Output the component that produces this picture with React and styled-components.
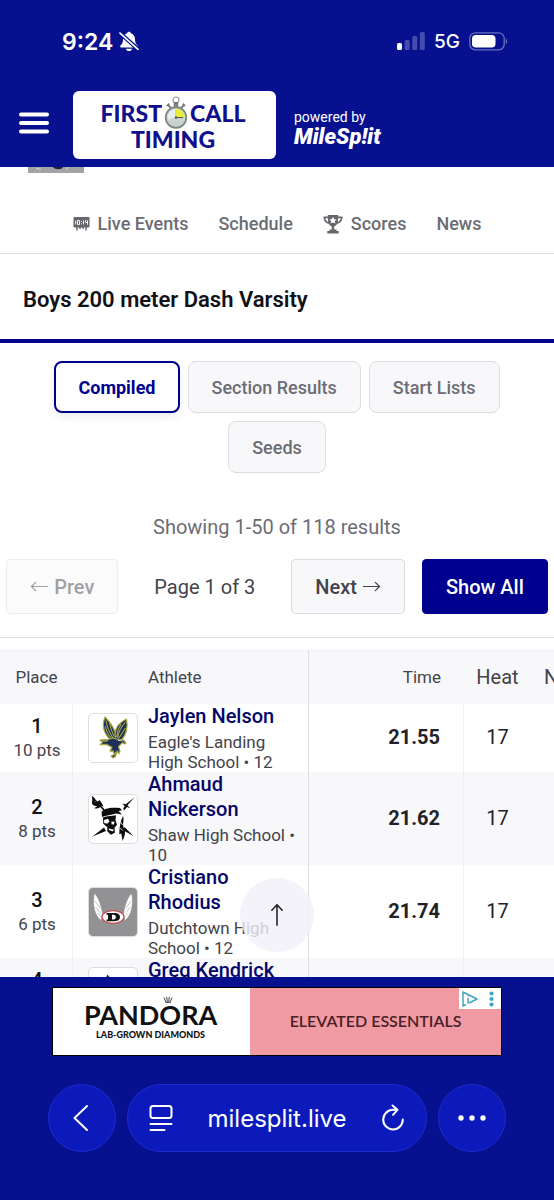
import React from "react"
import styled, { createGlobalStyle } from "styled-components"

const colors = {
  chrome: "#07108f",
  glass: "#0c1abb",
  glassEdge: "#1c2ccb",
  navy: "#00008f",
  name: "#05056a",
  title: "#111116",
  text: "#43434a",
  muted: "#6c6c74",
  panel: "#f8f8fb",
  line: "#dcdce1",
  faint: "#f1f1f5",
}

const GlobalStyle = createGlobalStyle`
  * {
    box-sizing: border-box;
  }
  body {
    margin: 0;
    background: ${colors.chrome};
    font-family: Roboto, sans-serif;
  }
  button {
    font-family: inherit;
    margin: 0;
    cursor: pointer;
  }
  svg {
    display: block;
    flex-shrink: 0;
  }
`

const Screen = styled.div`
  height: 100vh;
  display: flex;
  flex-direction: column;
`

/* ---------- top ---------- */

const StatusBar = styled.div`
  display: flex;
  justify-content: space-between;
  align-items: center;
  height: 83px;
  padding: 0 46px 0 62px;
  color: #fff;
  font-family: Inter, sans-serif;
`
const StatusGroup = styled.div`
  display: flex;
  align-items: center;
  gap: ${props => props.$gap};
`
const Clock = styled.span`
  font-size: 23px;
  font-weight: 600;
`
const Network = styled.span`
  font-size: 19px;
  font-weight: 500;
`
const Header = styled.header`
  display: flex;
  align-items: center;
  height: 84px;
  padding: 0 19px;
  color: #fff;
`
const MenuButton = styled.button`
  border: none;
  background: none;
  padding: 0 0 5px;
  margin-right: 24px;
`
const LogoLink = styled.a`
  display: flex;
  flex-direction: column;
  align-items: center;
  width: 203px;
  height: 68px;
  padding: 9px 3px 0 0;
  border-radius: 6px;
  background: #fff;
  color: #10108c;
  font-family: Lato, sans-serif;
  font-size: 23px;
  font-weight: 900;
  line-height: 26px;
  text-decoration: none;
`
const LogoLine = styled.span`
  display: flex;
  align-items: center;
  height: 26px;
  gap: 2px;
`
const Powered = styled.a`
  display: flex;
  flex-direction: column;
  margin-left: 18px;
  padding-top: 4px;
  color: #fff;
  font-size: 14px;
  line-height: 20px;
  text-decoration: none;
`
const MileSplit = styled.span`
  font-size: 22px;
  font-weight: 900;
  font-style: italic;
`

/* ---------- page ---------- */

const Main = styled.main`
  position: relative;
  flex: 1;
  min-height: 0;
  overflow: hidden;
  background: #fff;
`
const MeetBadge = styled.div`
  width: 56px;
  height: 6px;
  margin-left: 28px;
  background: #a3a3a5;
  overflow: hidden;
`
const Nav = styled.nav`
  display: flex;
  justify-content: center;
  gap: 30px;
  padding: 39px 0 17px;
  border-bottom: 1px solid ${colors.line};
`
const NavLink = styled.a`
  display: flex;
  align-items: center;
  gap: 8px;
  color: ${colors.muted};
  font-size: 18px;
  font-weight: 500;
  line-height: 24px;
  text-decoration: none;
`
const Title = styled.h1`
  margin: 0;
  padding: 32px 23px 25px;
  border-bottom: 4px solid ${colors.navy};
  color: ${colors.title};
  font-size: 22px;
  font-weight: 600;
  line-height: 28px;
`
const Tabs = styled.div`
  display: flex;
  flex-wrap: wrap;
  justify-content: center;
  gap: 8px;
  padding: 18px 20px 0;
`
const Tab = styled.button`
  height: 52px;
  padding: 0 ${props => props.$active ? "22px" : "23px"};
  border: ${props => props.$active ? `2px solid ${colors.navy}` : `1px solid ${colors.line}`};
  border-radius: 8px;
  background: ${props => props.$active ? "#fff" : colors.panel};
  color: ${props => props.$active ? colors.navy : colors.muted};
  box-shadow: ${props => props.$active ? "0 4px 8px rgba(0, 0, 0, 0.08)" : "none"};
  font-size: 18px;
  font-weight: ${props => props.$active ? 700 : 500};
`
const Summary = styled.p`
  margin: 42px 0 20px;
  color: ${colors.muted};
  font-size: 20px;
  line-height: 24px;
  text-align: center;
`
const Pager = styled.div`
  display: flex;
  justify-content: center;
  align-items: center;
  gap: 17px;
  padding-bottom: 23px;
  border-bottom: 1px solid ${colors.line};
`
const PagerButton = styled.button`
  display: flex;
  align-items: center;
  gap: 5px;
  height: 55px;
  padding: 0 23px;
  border: 1px solid ${props => props.$primary ? colors.navy : colors.line};
  border-radius: 4px;
  background: ${props => props.$primary ? colors.navy : colors.panel};
  color: ${props => props.$primary ? "#fff" : colors.text};
  font-size: 20px;
  font-weight: 500;
  &:disabled {
    opacity: 0.5;
  }
`
const PageLabel = styled.span`
  padding: 0 19px;
  color: ${colors.text};
  font-size: 20px;
`

/* ---------- results ---------- */

const Results = styled.table`
  width: 100%;
  min-width: 640px;
  margin-top: 12px;
  border-collapse: separate;
  border-spacing: 0;
  table-layout: fixed;
`
const HeadCell = styled.th`
  width: ${props => props.$width};
  height: 54px;
  padding: ${props => props.$pad || "0"};
  background: ${colors.panel};
  border-top: 1px solid ${colors.faint};
  border-right: ${props => props.$edge ? `1px solid ${colors.line}` : "none"};
  color: ${colors.text};
  font-size: ${props => props.$big ? "20px" : "17px"};
  font-weight: 400;
  text-align: ${props => props.$align || "center"};
`
const Row = styled.tr`
  background: ${props => props.$shaded ? colors.panel : "#fff"};
`
const Cell = styled.td`
  padding: ${props => props.$pad || "0"};
  border-right: ${props => props.$last ? "none" : `1px solid ${props.$edge ? colors.line : colors.faint}`};
  color: #222226;
  font-size: 20px;
  font-weight: ${props => props.$bold ? 700 : 400};
  line-height: 24px;
  text-align: ${props => props.$align || "center"};
`
const Place = styled.div`
  color: ${colors.title};
  font-size: 20px;
  font-weight: 500;
`
const Points = styled.div`
  min-height: 24px;
  color: ${colors.text};
  font-size: 17px;
`
const Athlete = styled.div`
  display: flex;
  align-items: center;
  gap: 10px;
  text-align: left;
`
const TeamLogo = styled.div`
  flex-shrink: 0;
  width: 50px;
  height: 50px;
  padding: 1px;
  border: 1px solid ${colors.line};
  border-radius: 5px;
  background: ${props => props.$fill || "#fff"};
`
const AthleteName = styled.a`
  display: block;
  color: ${colors.name};
  font-size: 20px;
  font-weight: 500;
  line-height: 25px;
  text-decoration: none;
`
const School = styled.div`
  min-height: 40px;
  margin-top: 3px;
  color: ${colors.text};
  font-size: 17px;
  line-height: 20px;
`
const ToTop = styled.button`
  position: absolute;
  left: 50%;
  bottom: 25px;
  display: flex;
  align-items: center;
  justify-content: center;
  width: 74px;
  height: 74px;
  margin-left: -37px;
  border: none;
  border-radius: 50%;
  background: rgba(240, 240, 248, 0.8);
  color: #222;
`

/* ---------- bottom ---------- */

const Bottom = styled.footer`
  padding: 10px 48px 48px;
  background: ${colors.chrome};
`
const Ad = styled.a`
  position: relative;
  display: flex;
  max-width: 450px;
  height: 69px;
  margin: 0 auto 28px;
  border: 1px solid #000;
  background: #fff;
  text-decoration: none;
  font-family: Lato, sans-serif;
`
const AdBrand = styled.div`
  flex: 196;
  display: flex;
  flex-direction: column;
  align-items: center;
  justify-content: center;
  padding: 0 2px 2px 0;
  color: #111;
`
const Pandora = styled.span`
  position: relative;
  font-size: 27px;
  font-weight: 700;
  line-height: 28px;
`
const Crown = styled.svg`
  position: absolute;
  left: 79px;
  top: -5px;
`
const AdTag = styled.span`
  font-size: 9px;
  font-weight: 900;
  line-height: 12px;
`
const AdMessage = styled.div`
  flex: 252;
  display: flex;
  align-items: center;
  justify-content: center;
  padding-bottom: 2px;
  background: #f09aa4;
  color: #4a2024;
  font-size: 16px;
  font-weight: 600;
`
const AdChoices = styled.span`
  position: absolute;
  right: 0;
  top: 0;
  display: flex;
  align-items: center;
  justify-content: center;
  gap: 11px;
  width: 42px;
  height: 21px;
  padding-right: 4px;
  background: #fff;
`
const Toolbar = styled.div`
  display: flex;
  gap: 11px;
`
const GlassButton = styled.button`
  display: flex;
  align-items: center;
  justify-content: center;
  width: 68px;
  height: 68px;
  padding: 0;
  border: 1px solid ${colors.glassEdge};
  border-radius: 34px;
  background: ${colors.glass};
  color: #fff;
`
const Address = styled.div`
  flex: 1;
  display: flex;
  align-items: center;
  justify-content: space-between;
  height: 68px;
  padding: 0 21px;
  border: 1px solid ${colors.glassEdge};
  border-radius: 34px;
  background: ${colors.glass};
  color: #fff;
  font-family: Inter, sans-serif;
`
const PlainButton = styled.button`
  border: none;
  padding: 0;
  background: none;
  color: inherit;
  font-size: ${props => props.$size || "16px"};
`

const BellOff = () => (
  <svg width="20" height="21" viewBox="0 0 20 21" fill="#fff">
    <path d="M10 .8c1 0 1.700.6 1.800 1.400 2.700.8 4.200 3 4.200 5.800 0 3.600.8 4.800 2.500 6.600.8.9.4 2-.8 2H2.300c-1.200 0-1.600-1.100-.8-2C3.200 12.800 4 11.600 4 8c0-2.800 1.500-5 4.200-5.800C8.300 1.400 9 .8 10 .8z" />
    <path d="M6.900 17.700h6.200c-.3 1.500-1.500 2.400-3.100 2.400s-2.800-.9-3.100-2.400z" />
    <path d="M.6 1.800L20 19" stroke={colors.chrome} strokeWidth="4.200" />
    <path d="M1 2.100l18 16.200" stroke="#fff" strokeWidth="1.700" strokeLinecap="round" />
  </svg>
)

const Signal = () => (
  <svg width="28" height="19" viewBox="0 0 28 19" fill="#fff">
    <rect x="0" y="11" width="5" height="7" rx="1.500" />
    <rect x="7.700" y="8" width="5" height="10" rx="1.500" opacity=".25" />
    <rect x="15.300" y="4" width="5" height="14" rx="1.500" opacity=".25" />
    <rect x="22.800" y="0" width="5" height="18" rx="1.500" opacity=".25" />
  </svg>
)

const Battery = () => (
  <svg width="39" height="19" viewBox="0 0 39 19">
    <rect x=".8" y=".8" width="34.400" height="17" rx="5.500" fill="none" stroke="#fff" strokeOpacity=".4" strokeWidth="1.300" />
    <rect x="3" y="3" width="23.500" height="12.600" rx="3.800" fill="#fff" />
    <path d="M36.800 6.500c1.400.6 1.400 5 0 5.600z" fill="#fff" opacity=".5" />
  </svg>
)

const Stopwatch = () => (
  <svg width="24" height="34" viewBox="0 0 24 34">
    <circle cx="12" cy="4" r="3" fill="none" stroke="#9a9a9a" strokeWidth="1.200" />
    <path d="M10.700 7h2.600v4h-2.600zM4 9l3 3M20 9l-3 3" stroke="#777" strokeWidth="1.800" fill="#999" />
    <path d="M2.800 10l2.400-2.300M21.200 10l-2.400-2.300" stroke="#777" strokeWidth="1.600" />
    <circle cx="12" cy="21.500" r="10.300" fill="#c9d3d2" stroke="#7d8584" strokeWidth="1.700" />
    <path d="M4 24a8.500 8.500 0 0 1 7-11v8.500z" fill="#e8eeee" />
    <path d="M12 21.500v-9a9 9 0 0 1 9 9z" fill="#e9ee3c" />
    <path d="M11 21.500h8" stroke="#555" strokeWidth="1" />
    <circle cx="12" cy="21.500" r="1.200" fill="#555" />
  </svg>
)

const Scoreboard = () => (
  <svg width="17" height="14" viewBox="0 0 17 14">
    <rect x=".5" y="0" width="16" height="10.500" rx="1" fill="#66666c" />
    <path d="M4 10v3.500M13 10v3.500M7 10v2M10 10v2" stroke="#66666c" strokeWidth="1.400" />
    <path d="M2.700 3.500v4M4.500 3.500h2v4h-2zM8.500 4v1M8.500 6.300v1M10.500 3.500v4M12.500 3.200v2.300h2M14.500 3.200v4.500" stroke="#fff" strokeWidth=".9" fill="none" />
  </svg>
)

const Trophy = () => (
  <svg width="20" height="19" viewBox="0 0 20 19">
    <path d="M4.800 0h10.400v1.600h4.300c.1 3.900-1.700 6.700-5.300 7.200-.8 1.400-1.800 2.300-3 2.800v3h2.300v1.500h2.200V18.500H4.300v-2.400h2.200v-1.500h2.300v-3c-1.200-.5-2.200-1.400-3-2.800C2.200 8.300.4 5.500.5 1.600h4.300z" fill="#66666c" />
    <path d="M2.300 3.200h2.600c0 1.400.1 2.600.4 3.700-1.700-.6-2.700-1.800-3-3.700zM17.700 3.200h-2.600c0 1.400-.1 2.600-.4 3.700 1.700-.6 2.700-1.800 3-3.700z" fill="#fff" />
    <path d="M10 1.800l1.100 2.300 2.500.3-1.800 1.700.5 2.500L10 7.400 7.700 8.600l.5-2.500-1.800-1.700 2.500-.3z" fill="#fff" />
  </svg>
)

const Arrow = ({ turn = 0, size = 19 }) => (
  <svg width={size} height={size} viewBox="0 0 20 20" fill="none" stroke="currentColor" strokeWidth="1.300" strokeLinecap="round" strokeLinejoin="round">
    <path transform={`rotate(${turn} 10 10)`} d="M1.500 10h17M14 5.700l4.500 4.300-4.500 4.300" />
  </svg>
)

const Eagle = () => (
  <svg width="46" height="46" viewBox="0 0 46 46">
    <g fill="#1d3157" stroke="#a9a847" strokeWidth="1.200" strokeLinejoin="round">
      <path d="M15 2c-2.500 6-2.300 12.500 1.500 18 1.500 2.500 3.500 4.500 6 7l4-4C25.500 14 20 7 15 2z" />
      <path d="M36.500 4c-6.500 3-11 8-11.500 15l1 8 5.500-2C37 19 38 12 36.500 4z" />
      <path d="M10 25l8-.5 5-1.500 6 2c3-1 5.500 0 7 3.500l-2 .3-1.500-1.200-4 4 1.500 4.400-1.200 2.800-1.600-3-1.700 5.500-2.400 1.700-2-2 3.200-1.500-1.300-3.400-3-.3 2-3.400-5.500-3-6.500.3 2.500-2.300z" />
    </g>
    <path d="M16 5.500c1 7 4 13 7 17.500M15.200 11c1 5 3 9 6 12M19.500 8c1 5 3 10 4.500 13.500M35.500 7c-4.500 5-7 10-8 16M35.500 13c-2.500 4-5 8-7.500 11M31 9c-2.500 4-4 8-4.500 13" stroke="#a9a847" strokeWidth="1.100" fill="none" />
    <path d="M12 26l6-.3M20 36l4 .5M24 40l2-3" stroke="#a9a847" strokeWidth="1.400" fill="none" />
    <path d="M28 25.500c1.500-.5 3-.3 4.200.6" stroke="#e8e8ee" strokeWidth="1" fill="none" />
  </svg>
)

const Pirate = () => (
  <svg width="46" height="46" viewBox="0 0 46 46" fill="#0c0c0c">
    <path d="M2 0c2.500.8 3 3.500 2.700 6 1.800.5 3.500-.3 4.500-2 2 1.500 3 4 4.500 6.500l-2.500-.8c-1.500 2.500-4.500 3.500-7 2.300l3.300-1.400C3.500 10 .8 8 2.300 4.800z" />
    <path d="M3 2l11 12" stroke="#0c0c0c" strokeWidth="1.800" />
    <path d="M44.500 1.200l-7 8 2.500 3-3-1.200-3 3.500-.8-2.300 1.500-2-2.300-2.700 3.300.8z" />
    <path d="M11.500 16c2.500-3.500 8.500-5 18.500-4l2 2.300-3.500.7 3.500 3.500-6-1c-5 1.500-10 1.800-14 3.500z" />
    <path d="M13 21.500c4-1.800 9-1.500 13-2.300l-.5 5 1.500 4.500-2.500 3 .3 5-4 2-3.500-3.500v-4l-4-3.500z" />
    <path d="M14 24l4-1.300 1.500 3-2.500 2-2.800-.8zM21.500 25.500l3 .3-.5 2.700-2.500-.2zM18.500 32.500l5 .9-.4 2-4-1.400z" fill="#fff" />
    <path d="M2.500 40.500l11.500-9 2 3.500zM43.500 40l-9-9-1 3.500z" />
    <path d="M33 20c1.500 4-1 8 .8 12 2.500 4 .8 8-1.200 13l-1.300-7.500-2 .8c0-6 .8-13 3.700-18.300z" />
    <path d="M30.500 26l2 3M30.200 32l2.500 2.500" stroke="#fff" strokeWidth=".8" />
  </svg>
)

const WingedD = () => (
  <svg width="46" height="46" viewBox="0 0 46 46">
    <g fill="#fff" stroke="#888" strokeWidth=".5">
      <path d="M4.500 4c5 6.500 7 13 8.200 22.500l-1.500 5C4.500 27 2 15 4.500 4z" />
      <path d="M41.500 4c-5 6.500-7 13-8.200 22.500l1.500 5C41.500 27 44 15 41.500 4z" />
      <path d="M5 12l5 7M5.500 18l5 6M7.500 24l4 4M41 12l-5 7M40.500 18l-5 6M38.500 24l-4 4" />
    </g>
    <ellipse cx="23" cy="28" rx="11" ry="6.300" fill="#fff" stroke="#c64e4e" strokeWidth="1.300" />
    <path fillRule="evenodd" d="M16.500 24h8c4 0 5.500 1.800 5.500 4s-1.500 4.200-5.500 4.200h-8v-1.700h1.500v-4.800h-1.500zM22 25.800v4.700h1.800c1.300 0 2-1 2-2.400s-.7-2.300-2-2.300z" fill="#151515" />
  </svg>
)

const Peak = () => (
  <svg width="46" height="46" viewBox="0 0 46 46">
    <path d="M17.500 5.500l3 4 5 8h-14z" fill="#2a2a2e" />
  </svg>
)

const results = [
  { place: 1, points: "10 pts", name: "Jaylen Nelson", school: "Eagle's Landing High School • 12", time: "21.55", heat: 17, logo: <Eagle /> },
  { place: 2, points: "8 pts", name: "Ahmaud Nickerson", school: "Shaw High School • 10", time: "21.62", heat: 17, logo: <Pirate /> },
  { place: 3, points: "6 pts", name: "Cristiano Rhodius", school: "Dutchtown High School • 12", time: "21.74", heat: 17, logo: <WingedD />, fill: "#929294" },
  { place: 4, name: "Greg Kendrick", logo: <Peak /> },
]

const ResultRow = ({ result, shaded }) => (
  <Row $shaded={shaded}>
    <Cell $pad="0 0 0 2px">
      <Place>{result.place}</Place>
      <Points>{result.points}</Points>
    </Cell>
    <Cell $edge $pad="0 8px 0 15px">
      <Athlete>
        <TeamLogo $fill={result.fill}>{result.logo}</TeamLogo>
        <div>
          <AthleteName href="#athlete">{result.name}</AthleteName>
          <School>{result.school}</School>
        </div>
      </Athlete>
    </Cell>
    <Cell $bold $align="right" $pad="0 23px 2px 0">{result.time}</Cell>
    <Cell $last $pad="0 0 2px">{result.heat}</Cell>
    <Cell $last />
  </Row>
)

const App = () => {
  return (
    <Screen>
      <GlobalStyle />
      <StatusBar>
        <StatusGroup $gap="6px">
          <Clock>9:24</Clock>
          <BellOff />
        </StatusGroup>
        <StatusGroup $gap="9px">
          <Signal />
          <Network>5G</Network>
          <Battery />
        </StatusGroup>
      </StatusBar>
      <Header>
        <MenuButton aria-label="Menu">
          <svg width="30" height="22" viewBox="0 0 30 22" stroke="#fff" strokeWidth="4" strokeLinecap="round">
            <path d="M2 2.500h26M2 11h26M2 19.500h26" />
          </svg>
        </MenuButton>
        <LogoLink href="#home">
          <LogoLine>FIRST <Stopwatch /> CALL</LogoLine>
          <LogoLine>TIMING</LogoLine>
        </LogoLink>
        <Powered href="#milesplit">
          powered by
          <MileSplit>MileSp!it</MileSplit>
        </Powered>
      </Header>

      <Main>
        <MeetBadge>
          <svg width="56" height="6" viewBox="0 0 56 6">
            <path d="M25 0h10c-1 3-8 3-10 0z" fill="#20204a" />
            <path d="M8 1l5 1.500M40 0l-2 2.500" stroke="#d8d8dc" />
          </svg>
        </MeetBadge>
        <Nav>
          <NavLink href="#live"><Scoreboard /> Live Events</NavLink>
          <NavLink href="#schedule">Schedule</NavLink>
          <NavLink href="#scores"><Trophy /> Scores</NavLink>
          <NavLink href="#news">News</NavLink>
        </Nav>
        <Title>Boys 200 meter Dash Varsity</Title>
        <Tabs>
          <Tab $active>Compiled</Tab>
          <Tab>Section Results</Tab>
          <Tab>Start Lists</Tab>
          <Tab>Seeds</Tab>
        </Tabs>
        <Summary>Showing 1-50 of 118 results</Summary>
        <Pager>
          <PagerButton disabled><Arrow turn={180} /> Prev</PagerButton>
          <PageLabel>Page 1 of 3</PageLabel>
          <PagerButton>Next <Arrow /></PagerButton>
          <PagerButton $primary>Show All</PagerButton>
        </Pager>
        <Results>
          <thead>
            <tr>
              <HeadCell $width="73px" $pad="0 0 2px">Place</HeadCell>
              <HeadCell $width="236px" $align="left" $pad="0 0 2px 75px" $edge>Athlete</HeadCell>
              <HeadCell $width="155px" $align="right" $pad="0 23px 2px 0">Time</HeadCell>
              <HeadCell $width="67px" $pad="0 0 2px" $big>Heat</HeadCell>
              <HeadCell $align="left" $pad="0 0 2px 13px" $big>N</HeadCell>
            </tr>
          </thead>
          <tbody>
            {results.map((result, i) => (
              <ResultRow key={result.place} result={result} shaded={i % 2 === 1} />
            ))}
          </tbody>
        </Results>
        <ToTop aria-label="Back to top"><Arrow turn={-90} size={24} /></ToTop>
      </Main>

      <Bottom>
        <Ad href="#ad">
          <AdBrand>
            <Pandora>
              PANDORA
              <Crown width="10" height="7" viewBox="0 0 10 7" fill="none" stroke="#111" strokeWidth=".8">
                <path d="M3 6.500L1 1.500M4.300 6L3.700.8M5.700 6L6.300.8M7 6.500L9 1.500M2.500 6.700h5" />
              </Crown>
            </Pandora>
            <AdTag>LAB-GROWN DIAMONDS</AdTag>
          </AdBrand>
          <AdMessage>ELEVATED ESSENTIALS</AdMessage>
          <AdChoices>
            <svg width="16" height="16" viewBox="0 0 16 16" fill="none" stroke="#3fa6be" strokeWidth="1.500" strokeLinejoin="round">
              <path d="M4 13.500L1 15V1l14 7-8 4" />
              <path d="M6 7v5.500M6 4.500v1" />
            </svg>
            <svg width="5" height="16" viewBox="0 0 5 16" fill="#3fa6be">
              <circle cx="2.500" cy="2.500" r="2.100" />
              <circle cx="2.500" cy="8" r="2.100" />
              <circle cx="2.500" cy="13.500" r="2.100" />
            </svg>
          </AdChoices>
        </Ad>
        <Toolbar>
          <GlassButton aria-label="Back">
            <svg width="18" height="28" viewBox="0 0 18 28" fill="none" stroke="currentColor" strokeWidth="2" strokeLinecap="round" strokeLinejoin="round">
              <path d="M14 2L1.500 14 14 26" />
            </svg>
          </GlassButton>
          <Address>
            <PlainButton aria-label="Page settings">
              <svg width="24" height="28" viewBox="0 0 24 28" fill="none" stroke="currentColor" strokeWidth="2" strokeLinecap="round">
                <rect x="1.500" y="2" width="21" height="12" rx="2.500" />
                <path d="M1.500 20h21M1.500 26h14" />
              </svg>
            </PlainButton>
            <PlainButton $size="24px">milesplit.live</PlainButton>
            <PlainButton aria-label="Reload">
              <svg width="24" height="28" viewBox="0 0 24 28" fill="none" stroke="currentColor" strokeWidth="2" strokeLinecap="round" strokeLinejoin="round">
                <path d="M21.800 15.500A9.800 9.800 0 1 1 12 5.800h4.500M11.500 1.500l5 4.300-4.500 5" />
              </svg>
            </PlainButton>
          </Address>
          <GlassButton aria-label="More">
            <svg width="28" height="6" viewBox="0 0 28 6" fill="currentColor">
              <circle cx="3" cy="3" r="2.700" />
              <circle cx="14" cy="3" r="2.700" />
              <circle cx="25" cy="3" r="2.700" />
            </svg>
          </GlassButton>
        </Toolbar>
      </Bottom>
    </Screen>
  )
}

export default App
